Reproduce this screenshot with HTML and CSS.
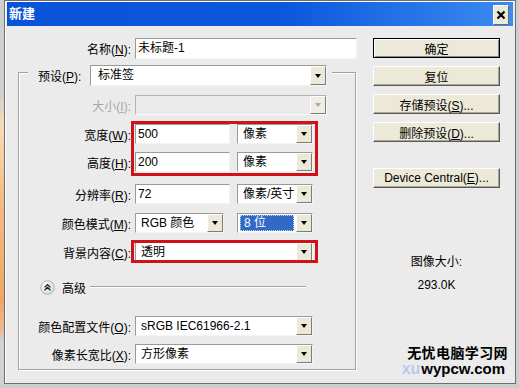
FILE: index.html
```html
<!DOCTYPE html>
<html lang="zh-CN">

<head>
    <meta charset="UTF-8">
    <title>新建</title>
    <link rel="stylesheet" href="styles.css">
</head>

<body>
    <div class="window">
        <div class="titlebar">
            <span class="title">新建</span>
            <span class="close">
                <svg width="14" height="18" viewBox="0 0 14 18"><path d="M3.5 5.5 L10.5 12.5 M10.5 5.5 L3.5 12.5" stroke="#000" stroke-width="2.2" /></svg>
            </span>
        </div>

        <div class="dialog">
            <div class="main">
                <div class="row name-row">
                    <label class="lbl">名称(<u>N</u>):</label>
                    <div class="field name-field">未标题-1</div>
                </div>

                <div class="group">
                    <div class="group-head">
                        <label class="head-lbl">预设(<u>P</u>):</label>
                        <div class="select preset-sel"><span class="val">标准签</span><i class="arrow"></i></div>
                    </div>

                    <div class="row r-size">
                        <label class="lbl off">大小(<u>I</u>):</label>
                        <div class="select off size-sel"><span class="val"></span><i class="arrow"></i></div>
                    </div>

                    <div class="mark mark-dims">
                        <div class="row">
                            <label class="lbl">宽度(<u>W</u>):</label>
                            <div class="field num">500</div>
                            <div class="select unit"><span class="val">像素</span><i class="arrow"></i></div>
                        </div>
                        <div class="row r-height">
                            <label class="lbl">高度(<u>H</u>):</label>
                            <div class="field num">200</div>
                            <div class="select unit"><span class="val">像素</span><i class="arrow"></i></div>
                        </div>
                    </div>

                    <div class="row r-res">
                        <label class="lbl">分辨率(<u>R</u>):</label>
                        <div class="field num">72</div>
                        <div class="select unit"><span class="val">像素/英寸</span><i class="arrow"></i></div>
                    </div>

                    <div class="row r-mode">
                        <label class="lbl">颜色模式(<u>M</u>):</label>
                        <div class="select mode-sel"><span class="val">RGB 颜色</span><i class="arrow"></i></div>
                        <div class="select unit"><span class="val hl">8 位</span><i class="arrow"></i></div>
                    </div>

                    <div class="mark mark-bg">
                        <div class="row">
                            <label class="lbl">背景内容(<u>C</u>):</label>
                            <div class="select wide"><span class="val">透明</span><i class="arrow"></i></div>
                        </div>
                    </div>

                    <div class="adv">
                        <svg class="adv-icon" width="15" height="15" viewBox="0 0 15 15">
                            <defs>
                                <radialGradient id="knob" cx="0.4" cy="0.35" r="0.7">
                                    <stop offset="0" stop-color="#ffffff" />
                                    <stop offset="1" stop-color="#d6d6d6" />
                                </radialGradient>
                            </defs>
                            <circle cx="7.5" cy="7.5" r="6.8" fill="url(#knob)" stroke="#a4a4a4" stroke-width="0.8" />
                            <path d="M4.6 7.4 L7.5 4.6 L10.4 7.4 M4.6 10.2 L7.5 7.4 L10.4 10.2" fill="none" stroke="#111" stroke-width="1.3" />
                        </svg>
                        <span class="adv-text">高级</span>
                        <span class="adv-line"></span>
                    </div>

                    <div class="row r-profile">
                        <label class="lbl">颜色配置文件(<u>O</u>):</label>
                        <div class="select wide"><span class="val">sRGB IEC61966-2.1</span><i class="arrow"></i></div>
                    </div>

                    <div class="row r-aspect">
                        <label class="lbl">像素长宽比(<u>X</u>):</label>
                        <div class="select wide"><span class="val">方形像素</span><i class="arrow"></i></div>
                    </div>
                </div>
            </div>

            <div class="side">
                <button class="btn default">确定</button>
                <button class="btn">复位</button>
                <button class="btn">存储预设(<u>S</u>)...</button>
                <button class="btn">删除预设(<u>D</u>)...</button>
                <button class="btn device">Device Central(<u>E</u>)...</button>

                <div class="info">图像大小:</div>
                <div class="info size">293.0K</div>

                <div class="wm">
                    <div class="wm-cn">无忧电脑学习网</div>
                    <div class="wm-url"><span class="wm-ghost">xu</span>wypcw.com</div>
                </div>
            </div>
        </div>
    </div>
</body>

</html>
```

FILE: styles.css
```css
/* Photoshop "新建" dialog, classic Windows look */
*,
*::before,
*::after {
    box-sizing: border-box;
}

body {
    margin: 0;
    background:
        linear-gradient(to bottom, #cfcfcf 0, #cfcfcf 95px, #f7dcb8 125px, #f4bb82 200px, #f0a664 300px, #e9bd98 332px, #d2d2d2 342px) left top / 4px 100% no-repeat,
        #cdcdcd;
    font-family: "Liberation Sans", "Noto Sans CJK SC", sans-serif;
    font-size: 12px;
    color: #000;
}

u {
    text-decoration: underline;
    text-underline-offset: 1px;
}

.window {
    margin-left: 4px;
    width: 512px;
    height: 384px;
    border: 1px solid #6f6f6f;
    padding: 1px 2px 2px;
    background: #ebebeb;
    box-shadow: inset 1px 1px #fff;
}

.titlebar {
    height: 24px;
    display: flex;
    justify-content: space-between;
    align-items: flex-start;
    background: linear-gradient(to right, #0953d8 0%, #0c58dd 55%, #3b8bf0 100%);
}

.title {
    color: #fff;
    font-weight: bold;
    font-size: 13px;
    line-height: 24px;
    padding-left: 2px;
}

.close {
    width: 16px;
    height: 20px;
    margin: 3px 4px 0 0;
    display: flex;
    align-items: flex-start;
    justify-content: center;
    background: #ece9d8;
    border: 1px solid;
    border-color: #fff #6a6a6a #6a6a6a #fff;
}

.dialog {
    display: flex;
    padding: 12px 0 0 11px;
}

.main {
    width: 339px;
}

.row {
    display: flex;
    align-items: center;
    height: 20px;
}

.lbl {
    width: 112px;
    margin-right: 4px;
    text-align: right;
    white-space: nowrap;
}

.lbl.off {
    color: #a6a6a6;
}

.name-row {
    height: 21px;
}

.name-row .lbl {
    width: 113px;
}

.field {
    height: 20px;
    line-height: 18px;
    padding-left: 2px;
    background: #fff;
    border: 1px solid;
    border-color: #9a9a9a #f4f4f4 #f4f4f4 #9a9a9a;
    white-space: nowrap;
}

.name-field {
    width: 222px;
    height: 21px;
    line-height: 19px;
}

.num {
    width: 95px;
    margin-right: 7px;
}

/* dropdowns */
.select {
    height: 20px;
    display: flex;
    align-items: stretch;
    background: #fff;
    border: 1px solid;
    border-color: #9a9a9a #f4f4f4 #f4f4f4 #9a9a9a;
    white-space: nowrap;
}

.select .val {
    flex: 1;
    line-height: 18px;
    padding-left: 5px;
}

.select .val.hl {
    margin: 1px 2px 1px 2px;
    line-height: 16px;
    padding-left: 4px;
    background: #3169c6;
    color: #fff;
    outline: 1px dotted #c9d6ee;
    outline-offset: -1px;
}

.arrow {
    width: 16px;
    display: flex;
    align-items: center;
    justify-content: center;
    background: #ece9d8;
    border: 1px solid;
    border-color: #fff #7c7c7c #7c7c7c #fff;
}

.arrow::after {
    content: "";
    border-style: solid;
    border-width: 4px 3.5px 0;
    border-color: #000 transparent transparent;
}

.select.off {
    background: #ebebeb;
    border-color: #b4b4b4 #fafafa #fafafa #b4b4b4;
}

.select.off .arrow {
    background: #efede4;
}

.select.off .arrow::after {
    border-top-color: #a8a8a8;
}

.preset-sel {
    width: 237px;
    height: 21px;
}

.preset-sel .val {
    line-height: 19px;
    padding-left: 7px;
}

.size-sel {
    width: 192px;
}

.unit {
    width: 76px;
}

.mode-sel {
    width: 89px;
    margin-right: 13px;
}

.wide {
    width: 178px;
}

/* group box */
.group {
    margin-top: 13px;
    width: 338px;
    border: 1px solid #a2a2a2;
    box-shadow: inset 1px 1px #fff, 1px 1px #fff;
    padding-bottom: 5px;
}

.group-head {
    display: flex;
    align-items: center;
    width: max-content;
    margin: -8px 0 0 9px;
    padding: 0 5px 0 10px;
    background: #ebebeb;
}

.head-lbl {
    width: 48px;
    margin-right: 4px;
    white-space: nowrap;
}

.r-size {
    margin-top: 9px;
}

.mark {
    position: relative;
}

.mark::after {
    content: "";
    position: absolute;
    left: 112px;
    width: 187px;
    border: 3px solid #cf1219;
}

.mark-dims {
    margin-top: 9px;
}

.mark-dims::after {
    top: -3px;
    bottom: -4px;
}

.r-height {
    margin-top: 8px;
}

.r-res {
    margin-top: 12px;
}

.r-mode {
    margin-top: 9px;
}

.mark-bg {
    margin-top: 9px;
}

.mark-bg::after {
    top: -2px;
    bottom: -1px;
}

.adv {
    margin-top: 17px;
    height: 16px;
    display: flex;
    align-items: center;
    padding-left: 21px;
}

.adv-text {
    margin-left: 7px;
}

.adv-line {
    width: 216px;
    margin-left: 4px;
    border-top: 1px solid #a2a2a2;
    border-bottom: 1px solid #fff;
}

.r-profile {
    margin-top: 21px;
}

.r-aspect {
    margin-top: 8px;
}

/* right column */
.side {
    width: 127px;
    margin-left: 16px;
    display: flex;
    flex-direction: column;
}

.btn {
    height: 20px;
    margin: 0 0 8px;
    padding: 0;
    font: inherit;
    color: #000;
    background: #ece9d8;
    border: 1px solid;
    border-color: #fff #5a5a5a #5a5a5a #fff;
    box-shadow: inset -1px -1px #a9a594;
}

.btn.default {
    border: 1px solid #000;
    box-shadow: inset 1px 1px #fff, inset -1px -1px #8a8a8a;
}

.btn.device {
    margin-top: 18px;
}

.info {
    margin-top: 58px;
    text-align: center;
    line-height: 16px;
}

.info.size {
    margin-top: 7px;
}

.wm {
    margin: 52px -8px 0 0;
    align-self: flex-end;
    text-align: right;
}

.wm-cn {
    font-size: 14px;
    font-weight: bold;
    letter-spacing: 0.4px;
    line-height: 16px;
}

.wm-url {
    font-size: 15px;
    font-weight: bold;
    line-height: 16px;
    padding-right: 3px;
}

.wm-ghost {
    font-size: 16px;
    color: #b3cdee;
    margin-right: 1px;
}
```
